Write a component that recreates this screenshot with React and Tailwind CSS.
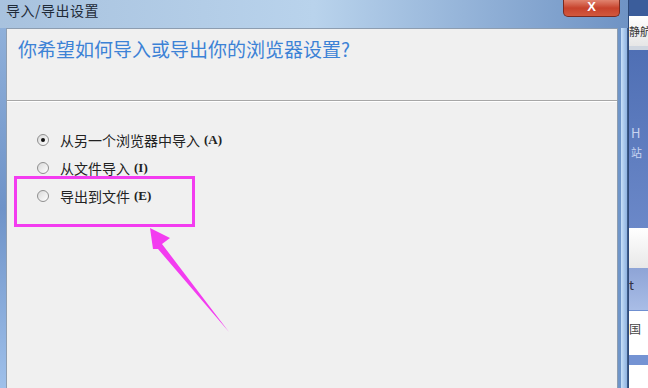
import React from "react";

const font = { fontFamily: '"Noto Sans CJK SC", "Liberation Sans", sans-serif' };

const Radio = ({ checked }) => (
  <span className="w-[12px] h-[12px] rounded-full border border-[#8f8f8f] bg-gradient-to-br from-[#d9d9d9] to-white flex items-center justify-center shrink-0">
    {checked && <span className="w-[4px] h-[4px] rounded-full bg-[#111]" />}
  </span>
);

const Option = ({ label, hotkey, checked }) => (
  <div className="flex items-center h-[28px] pl-[30px]">
    <Radio checked={checked} />
    <span className="ml-[11px] text-[14px] text-[#222] leading-none" style={font}>
      {label}
    </span>
    <span className="text-[13px] text-[#222] font-bold ml-[4px]" style={{ fontFamily: '"Liberation Serif", serif' }}>
      ({hotkey})
    </span>
  </div>
);

const SideStrip = () => (
  <div className="w-[20px] flex flex-col overflow-hidden border-l border-[#2d4a7a]" style={font}>
    <div className="h-[16px] bg-[#3b5d9b]" />
    <div className="h-[30px] bg-gradient-to-b from-white to-[#e6e6e6] text-[11px] text-[#333] pt-[7px] whitespace-nowrap">静航</div>
    <div className="h-[4px] bg-[#cfd6e0]" />
    <div className="h-[178px] bg-gradient-to-b from-[#4f6fb4] to-[#6b88c8] flex flex-col items-start pl-[2px] pt-[76px] text-[#c8d4f0] text-[13px] gap-[8px] leading-none">
      <span>H</span>
      <span className="text-[11px]">站</span>
    </div>
    <div className="h-[40px] bg-gradient-to-b from-white to-[#e8e8e8]" />
    <div className="h-[42px] bg-gradient-to-b from-[#8ea4d6] to-[#a9bde6] text-[#334] text-[13px] pt-[10px] leading-none">t</div>
    <div className="h-[37px] bg-white border-t border-[#6f8fd0] text-[12px] text-[#444] pt-[12px] leading-none">国</div>
    <div className="h-[8px] bg-white" />
    <div className="h-[10px] bg-[#7493d3]" />
    <div className="flex-1 bg-white" />
  </div>
);

export default function App() {
  return (
    <div className="w-[648px] h-[388px] overflow-hidden flex relative bg-white" style={font}>
      <div className="w-[628px] flex flex-col bg-gradient-to-b from-[#9fbde0] via-[#8aaed9] to-[#a8c6ea]">
        <div className="h-[28px] flex justify-between bg-gradient-to-r from-[#a8c2de] via-[#b9d3ec] to-[#6f93c4]">
          <span className="pl-[6px] pt-[3px] text-[14px] text-[#1e2a38] leading-none tracking-[0.5px]">
            导入/导出设置
          </span>
          <div className="flex">
            <div className="w-[57px] h-[17px] rounded-b-[5px] bg-gradient-to-b from-[#e0836f] via-[#c7422c] to-[#d2583d] border border-t-0 border-[#7a2a20] flex items-start justify-center">
              <span className="text-white text-[13px] font-bold leading-none" style={{ fontFamily: '"Liberation Sans", sans-serif' }}>X</span>
            </div>
            <div className="w-[8px]" />
          </div>
        </div>
        <div className="flex-1 flex">
          <div className="w-[6px] bg-gradient-to-b from-[#8fb0da] via-[#6f93c8] to-[#9fc0ea]" />
          <div className="flex-1 flex flex-col bg-[#f0f0f0] border border-b-0 border-[#8d9db0]">
            <div className="h-[72px] border-b border-[#a7a7a7] pl-[11px] pt-[9px]">
              <span className="text-[19px] text-[#3c82d6] leading-none">你希望如何导入或导出你的浏览器设置?</span>
            </div>
            <div className="border-t border-white pt-[24px] flex flex-col">
              <Option label="从另一个浏览器中导入" hotkey="A" checked />
              <Option label="从文件导入" hotkey="I" />
              <Option label="导出到文件" hotkey="E" />
            </div>
          </div>
          <div className="w-[10px] flex">
            <div className="w-[3px] bg-[#6f95c8]" />
            <div className="flex-1 bg-gradient-to-r from-[#c8e0f8] to-[#8eb2e0] border-r border-[#3d5a86]" />
          </div>
        </div>
      </div>
      <SideStrip />

      <div className="absolute left-[14px] top-[176px] w-[181px] h-[51px] border-[3px] border-[#f33cf0]" />
      <svg className="absolute left-0 top-0" width="648" height="388" viewBox="0 0 648 388">
        <polygon points="150,228 170,238 162,244 229,332 158,249 153,249" fill="#f33cf0" />
      </svg>
    </div>
  );
}
